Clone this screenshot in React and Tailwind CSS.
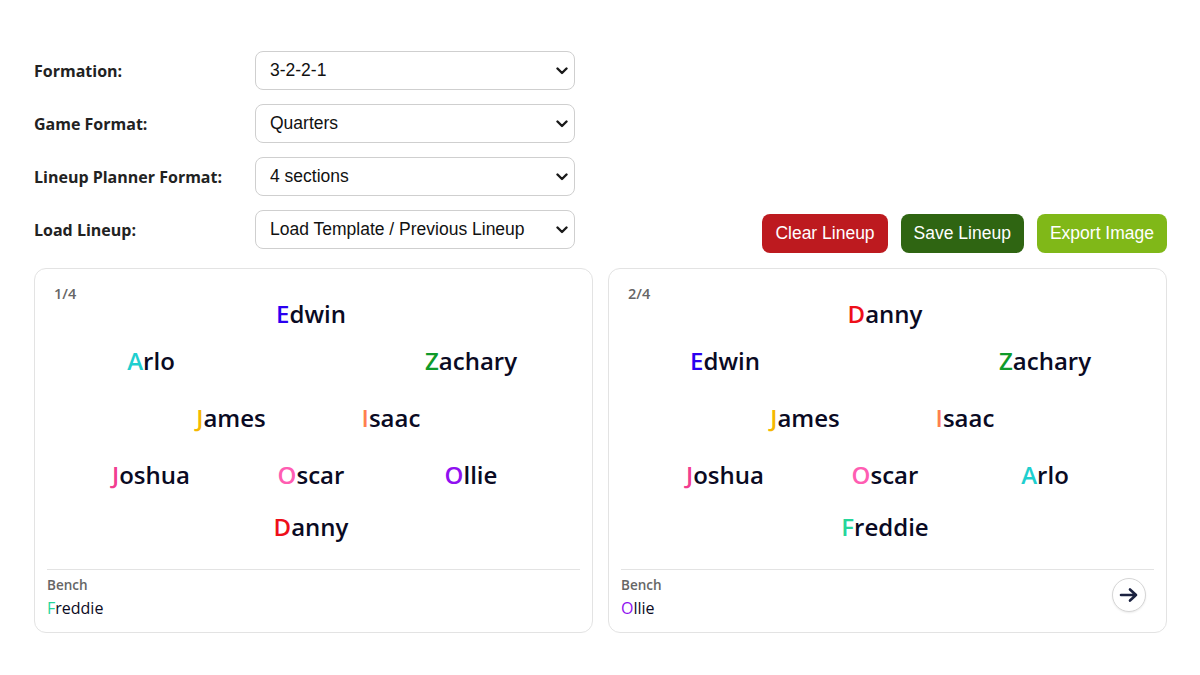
import React from "react";

const NAVY = "#0a0a23";

const COLORS = {
  Edwin: "#2a00f0",
  Arlo: "#1fcfcf",
  Zachary: "#0f9a2a",
  James: "#f5b800",
  Isaac: "#ff7f4f",
  Joshua: "#f23d90",
  Oscar: "#ff5db2",
  Ollie: "#9010f0",
  Danny: "#ee0f1a",
  Freddie: "#25d69a",
};

function Name({ name, className = "", size = "big" }) {
  const first = name[0];
  const rest = name.slice(1);
  return (
    <span
      className={
        size === "big"
          ? "text-[24px] leading-[32px] font-semibold whitespace-nowrap " + className
          : "text-[16px] leading-[20px] font-normal whitespace-nowrap " + className
      }
      style={{ color: NAVY }}
    >
      <span style={{ color: COLORS[name] }}>{first}</span>
      {rest}
    </span>
  );
}

function Chevron() {
  return (
    <svg
      className="pointer-events-none absolute right-[7px] top-1/2 -translate-y-1/2"
      width="12"
      height="8"
      viewBox="0 0 12 8"
      fill="none"
    >
      <path d="M1.5 1.5 L6 6 L10.5 1.5" stroke="#1a1a1a" strokeWidth="2.4" strokeLinecap="round" strokeLinejoin="round" />
    </svg>
  );
}

function Row({ label, value }) {
  return (
    <div className="flex items-center">
      <div className="w-[221px] text-[16px] font-bold text-[#222] font-['Open_Sans',sans-serif]">{label}</div>
      <div className="relative w-[320px]">
        <select
          defaultValue={value}
          className="appearance-none w-full h-[39px] rounded-[8px] border border-[#cfcfcf] bg-white pl-[14px] pr-[30px] text-[17.5px] text-[#111] font-['Liberation_Sans',Arial,sans-serif] outline-none"
        >
          <option>{value}</option>
        </select>
        <Chevron />
      </div>
    </div>
  );
}

function Pitch({ rows }) {
  const gaps = ["mt-0", "mt-[15px]", "mt-[25px]", "mt-[25px]", "mt-[20px]"];
  return (
    <div className="flex flex-col">
      {rows.map((r, i) => (
        <div key={i} className={"grid grid-cols-6 w-[480px] ml-[24px] h-[32px] " + gaps[i]}>
          {r.map(([n, cls]) => (
            <div key={n} className={"flex justify-center " + cls}>
              <Name name={n} />
            </div>
          ))}
        </div>
      ))}
    </div>
  );
}

function Card({ label, rows, bench, arrow }) {
  return (
    <div className="h-[365px] rounded-[12px] border border-[#e3e3e3] bg-white p-[12px] flex flex-col font-['Open_Sans',sans-serif]">
      <div className="h-[17px] pl-[7px] text-[14.5px] leading-[20px] font-semibold text-[#666] pt-[3px]">{label}</div>
      <Pitch rows={rows} />
      <div className="mt-[26px] border-t border-[#e3e3e3] pt-[6px] flex items-start justify-between">
        <div className="flex flex-col">
          <div className="text-[13.5px] leading-[18px] font-semibold text-[#666]">Bench</div>
          <div className="mt-[2px]">
            <Name name={bench} size="small" />
          </div>
        </div>
        {arrow && (
          <div className="mt-[2px] mr-[8px] w-[34px] h-[34px] rounded-full border border-[#d6d6d6] bg-white flex items-center justify-center shadow-[0_1px_2px_rgba(0,0,0,0.08)]">
            <svg width="20" height="16" viewBox="0 0 20 16" fill="none">
              <path d="M2 8 H17 M11 2.5 L17 8 L11 13.5" stroke="#1b2240" strokeWidth="2.6" strokeLinecap="round" strokeLinejoin="round" />
            </svg>
          </div>
        )}
      </div>
    </div>
  );
}

export default function App() {
  const rows1 = [
    [["Edwin", "col-start-3 col-span-2"]],
    [
      ["Arlo", "col-start-1 col-span-2"],
      ["Zachary", "col-start-5 col-span-2"],
    ],
    [
      ["James", "col-start-2 col-span-2"],
      ["Isaac", "col-start-4 col-span-2"],
    ],
    [
      ["Joshua", "col-start-1 col-span-2"],
      ["Oscar", "col-start-3 col-span-2"],
      ["Ollie", "col-start-5 col-span-2"],
    ],
    [["Danny", "col-start-3 col-span-2"]],
  ];
  const rows2 = [
    [["Danny", "col-start-3 col-span-2"]],
    [
      ["Edwin", "col-start-1 col-span-2"],
      ["Zachary", "col-start-5 col-span-2"],
    ],
    [
      ["James", "col-start-2 col-span-2"],
      ["Isaac", "col-start-4 col-span-2"],
    ],
    [
      ["Joshua", "col-start-1 col-span-2"],
      ["Oscar", "col-start-3 col-span-2"],
      ["Arlo", "col-start-5 col-span-2"],
    ],
    [["Freddie", "col-start-3 col-span-2"]],
  ];

  return (
    <div className="w-[1200px] h-[675px] bg-white pt-[51px] pl-[34px] pr-[33px] overflow-hidden">
      <div className="flex items-end justify-between">
        <div className="flex flex-col gap-[14px] pb-[4px]">
          <Row label="Formation:" value="3-2-2-1" />
          <Row label="Game Format:" value="Quarters" />
          <Row label="Lineup Planner Format:" value="4 sections" />
          <Row label="Load Lineup:" value="Load Template / Previous Lineup" />
        </div>
        <div className="flex gap-[13px] font-['Liberation_Sans',Arial,sans-serif] text-[17.5px] text-white">
          <button className="h-[39px] px-[13px] rounded-[8px] bg-[#bd1a1f]">Clear Lineup</button>
          <button className="h-[39px] px-[13px] rounded-[8px] bg-[#2f6512]">Save Lineup</button>
          <button className="h-[39px] px-[13px] rounded-[8px] bg-[#80b818]">Export Image</button>
        </div>
      </div>
      <div className="mt-[15px] grid grid-cols-2 gap-[15px]">
        <Card label="1/4" rows={rows1} bench="Freddie" />
        <Card label="2/4" rows={rows2} bench="Ollie" arrow />
      </div>
    </div>
  );
}
